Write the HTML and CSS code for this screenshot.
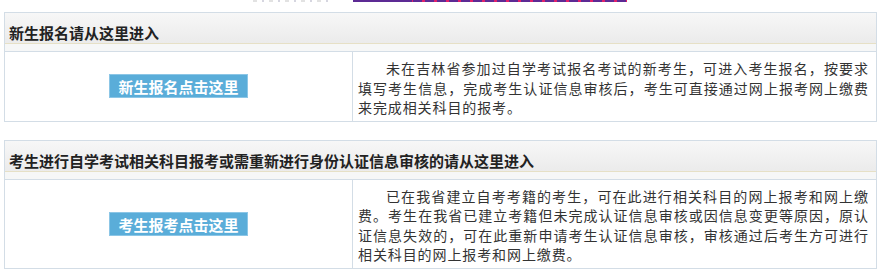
FILE: index.html
```html
<!DOCTYPE html>
<html lang="zh-CN">
<head>
    <meta charset="UTF-8">
    <title>自学考试报名</title>
    <link rel="stylesheet" href="styles.css">
</head>
<body>

<div class="topbar">
    <span class="frag"></span>
    <span class="link-line"></span>
</div>

<div class="panel">
    <div class="panel-head">新生报名请从这里进入</div>
    <div class="panel-gap"></div>
    <div class="panel-row">
        <div class="cell-btn">
            <a class="btn" href="#">新生报名点击这里</a>
        </div>
        <div class="cell-text">
            <p>未在吉林省参加过自学考试报名考试的新考生，可进入考生报名，按要求填写考生信息，完成考生认证信息审核后，考生可直接通过网上报考网上缴费来完成相关科目的报考。</p>
        </div>
    </div>
</div>

<div class="panel">
    <div class="panel-head">考生进行自学考试相关科目报考或需重新进行身份认证信息审核的请从这里进入</div>
    <div class="panel-gap"></div>
    <div class="panel-row">
        <div class="cell-btn">
            <a class="btn" href="#">考生报考点击这里</a>
        </div>
        <div class="cell-text">
            <p>已在我省建立自考考籍的考生，可在此进行相关科目的网上报考和网上缴费。考生在我省已建立考籍但未完成认证信息审核或因信息变更等原因，原认证信息失效的，可在此重新申请考生认证信息审核，审核通过后考生方可进行相关科目的网上报考和网上缴费。</p>
        </div>
    </div>
</div>

</body>
</html>
```

FILE: styles.css
```css
body {
    margin: 0;
    background-color: #fff;
    font-family: "Noto Sans CJK SC", "Microsoft YaHei", sans-serif;
    color: #333;
}
.topbar {
    display: flex;
    height: 2px;
}
.frag {
    margin-left: 253px;
    width: 77px;
    background: repeating-linear-gradient(90deg, #e2e2e2 0 4px, #fff 4px 9px, #d6d6e0 9px 11px, #fff 11px 16px);
}
.link-line {
    margin-left: 23px;
    width: 274px;
    background: linear-gradient(90deg, #5c2a94 0 59px, transparent 59px),
        repeating-linear-gradient(90deg, #5c2a94 0 9px, #e0206a 9px 12px);
}
.panel {
    width: 873px;
    margin: 10px 0 0 4px;
    border: 1px solid #d3dde6;
    box-sizing: border-box;
}
.panel + .panel {
    margin-top: 18px;
}
.panel-head {
    height: 31px;
    padding: 10px 0 0 4px;
    box-sizing: border-box;
    line-height: 19px;
    font-size: 15px;
    font-weight: bold;
    color: #222;
    background: linear-gradient(#f7f7f7, #ebebeb);
    border-bottom: 1px solid #e6e0c6;
}
.panel-gap {
    height: 7px;
    background-color: #f6f7f7;
    border-bottom: 1px solid #d3dde6;
}
.panel-row {
    display: grid;
    grid-template-columns: 348px 1fr;
}
.cell-btn {
    display: flex;
    justify-content: center;
    align-items: center;
    border-right: 1px solid #d3dde6;
}
.btn {
    display: block;
    padding: 0 8px;
    height: 24px;
    line-height: 23px;
    box-sizing: border-box;
    background-color: #5aadd9;
    border: 1px solid #8cc6e6;
    color: #fff;
    font-size: 15px;
    font-weight: bold;
    text-decoration: none;
}
.cell-text {
    padding: 7px 7px 3px 5px;
}
.cell-text p {
    margin: 0;
    font-size: 14px;
    line-height: 19.5px;
    letter-spacing: 0.9px;
    text-indent: 2em;
    text-align: justify;
}
```
